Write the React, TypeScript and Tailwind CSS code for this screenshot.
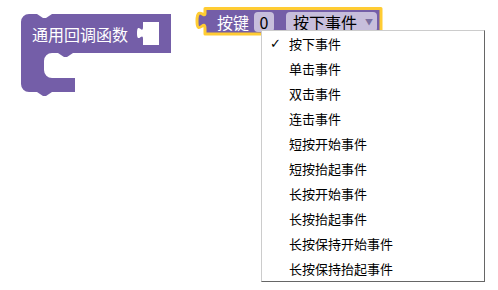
import React from 'react';

const font = { fontFamily: '"Noto Sans CJK SC", "Noto Sans", sans-serif' };

const items = [
  '按下事件',
  '单击事件',
  '双击事件',
  '连击事件',
  '短按开始事件',
  '短按抬起事件',
  '长按开始事件',
  '长按抬起事件',
  '长按保持开始事件',
  '长按保持抬起事件',
];

// 通用回调函数 block (C-shaped statement block)
const CallbackBlock = () => (
  <div className="absolute left-[21px] top-[14px] w-[150px] h-[82px]">
    <svg className="absolute inset-0 overflow-visible" width="150" height="82">
      <path
        d="M0,8 A8,8 0 0 1 8,0 H16 l6,4 h3 l6,-4 H150 V39 H52 l-6,4 h-3 l-6,-4 H31 a8,8 0 0 0 -8,8 V56 a8,8 0 0 0 8,8 H54 V78 H31 l-6,4 h-3 l-6,-4 H8 a8,8 0 0 1 -8,-8 Z"
        fill="#745ea8"
      />
      <path
        d="M122,8 H138 V31 H122 V25 c0,-8 -6,6 -6,-6 s6,2 6,-6 Z"
        fill="#ffffff"
      />
    </svg>
    <div className="relative flex items-center h-[39px] pl-[11px] text-white text-[16px] leading-none whitespace-nowrap" style={font}>
      通用回调函数
    </div>
  </div>
);

// 按键 block (selected, yellow outline)
const ButtonBlock = () => (
  <div className="absolute left-[197px] top-[8px] w-[185px] h-[27px]">
    <svg className="absolute inset-0 overflow-visible" width="185" height="27">
      <path
        d="M8,0.5 H184 V26 H8 V20.5 c0,-10 -8,8 -8,-7.5 s8,-2.5 8,-7.5 Z"
        fill="#745ea8"
        stroke="#ffcc33"
        strokeWidth="3"
        strokeLinejoin="round"
      />
    </svg>
    <div className="relative flex items-center h-[27px] pl-[20px] text-[16px] leading-none whitespace-nowrap" style={font}>
      <span className="text-white shrink-0">按键</span>
      <div className="ml-[5px] shrink-0 w-[20px] h-[20px] rounded-[4px] bg-white/60 flex items-center justify-center text-black">
        0
      </div>
      <div className="ml-[12px] shrink-0 w-[91px] h-[20px] rounded-[4px] bg-white/60 flex items-center pl-[7px] text-black">
        <span className="shrink-0">按下事件</span>
        <span className="ml-[8px] shrink-0 text-[8px] text-[#7a6fa0]">▼</span>
      </div>
    </div>
  </div>
);

const DropdownMenu = () => (
  <div
    className="absolute left-[261px] top-[30px] w-[224px] bg-white border border-[#cccccc] border-r-[#666666] border-b-[#666666] text-[13px] text-black"
    style={font}
  >
    {items.map((label, i) => (
      <div key={label} className="flex items-center h-[25px] pl-[8px] leading-none whitespace-nowrap">
        <span className="w-[19px] shrink-0" style={{ fontFamily: '"DejaVu Sans", sans-serif' }}>
          {i === 0 ? '✓' : ''}
        </span>
        <span>{label}</span>
      </div>
    ))}
  </div>
);

export default function App() {
  return (
    <div className="relative w-[498px] h-[290px] bg-white overflow-hidden">
      <CallbackBlock />
      <ButtonBlock />
      <DropdownMenu />
    </div>
  );
}
